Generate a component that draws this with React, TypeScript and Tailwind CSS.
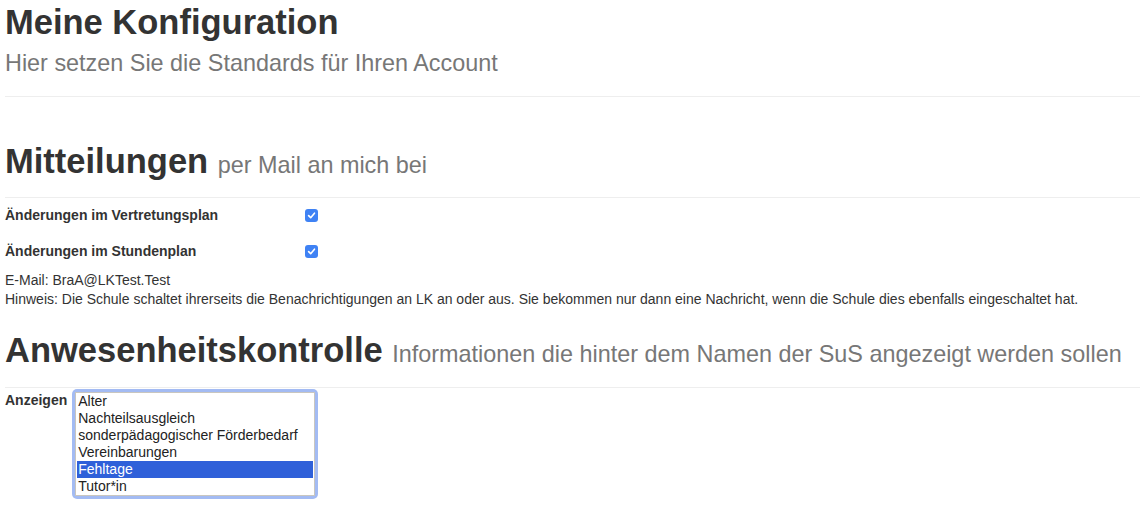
const OPTIONS = [
  'Alter',
  'Nachteilsausgleich',
  'sonderpädagogischer Förderbedarf',
  'Vereinbarungen',
  'Fehltage',
  'Tutor*in',
];

const SELECTED = 'Fehltage';

function Checkbox() {
  return (
    <span className="flex h-[13px] w-[13px] items-center justify-center rounded-[3px] bg-[#3f82f4]">
      <svg width="9" height="9" viewBox="0 0 10 10" fill="none">
        <path d="M1.8 5.2 L4.1 7.4 L8.3 2.4" stroke="white" strokeWidth="1.8" strokeLinecap="round" strokeLinejoin="round" />
      </svg>
    </span>
  );
}

function CheckRow({ label }: { label: string }) {
  return (
    <div className="flex h-[20px] items-center">
      <span className="w-[300px] text-[14px] font-bold">{label}</span>
      <Checkbox />
    </div>
  );
}

export default function App() {
  return (
    <div className="min-h-[515px] bg-white px-[5px] text-[#333] font-['Liberation_Sans',Arial,sans-serif]">
      {/* Kopf */}
      <h1 className="pt-[3px] text-[34.5px] font-bold leading-[38px]">Meine Konfiguration</h1>
      <p className="mt-[9px] text-[23.4px] leading-[26px] text-[#777]">Hier setzen Sie die Standards für Ihren Account</p>
      <hr className="mt-[20px] border-t border-[#eee]" />

      {/* Mitteilungen */}
      <h1 className="mt-[45px] h-[38px] text-[34.5px] font-bold leading-[38px]">
        Mitteilungen <small className="text-[23.4px] font-normal leading-none text-[#777]">per Mail an mich bei</small>
      </h1>
      <hr className="mt-[17px] border-t border-[#eee]" />
      <div className="mt-[7px] flex flex-col gap-[16px]">
        <CheckRow label="Änderungen im Vertretungsplan" />
        <CheckRow label="Änderungen im Stundenplan" />
      </div>
      <div className="mt-[10px] text-[14px] leading-[19px]">
        <p>E-Mail: BraA@LKTest.Test</p>
        <p>
          Hinweis: Die Schule schaltet ihrerseits die Benachrichtigungen an LK an oder aus. Sie bekommen nur dann eine
          Nachricht, wenn die Schule dies ebenfalls eingeschaltet hat.
        </p>
      </div>

      {/* Anwesenheitskontrolle */}
      <h1 className="mt-[22px] h-[38px] text-[34.5px] font-bold leading-[38px]">
        Anwesenheitskontrolle{' '}
        <small className="text-[23.4px] font-normal leading-none text-[#777]">
          Informationen die hinter dem Namen der SuS angezeigt werden sollen
        </small>
      </h1>
      <hr className="mt-[18px] border-t border-[#eee]" />
      <div className="flex items-start gap-[5px]">
        <span className="mt-[4px] text-[14px] font-bold leading-[16px]">Anzeigen</span>
        <div className="mt-[1px] rounded-[5px] bg-[#a3bbf3] p-[3px]">
          <div className="w-[240px] border border-[#c9c6bf] bg-white px-[1px] text-[14px]">
            {OPTIONS.map((o) => (
              <div
                key={o}
                className={
                  o === SELECTED
                    ? 'h-[17px] bg-[#2f60d9] px-[1px] leading-[17px] text-white'
                    : 'h-[17px] px-[1px] leading-[17px] text-[#222]'
                }
              >
                {o}
              </div>
            ))}
          </div>
        </div>
      </div>
    </div>
  );
}
